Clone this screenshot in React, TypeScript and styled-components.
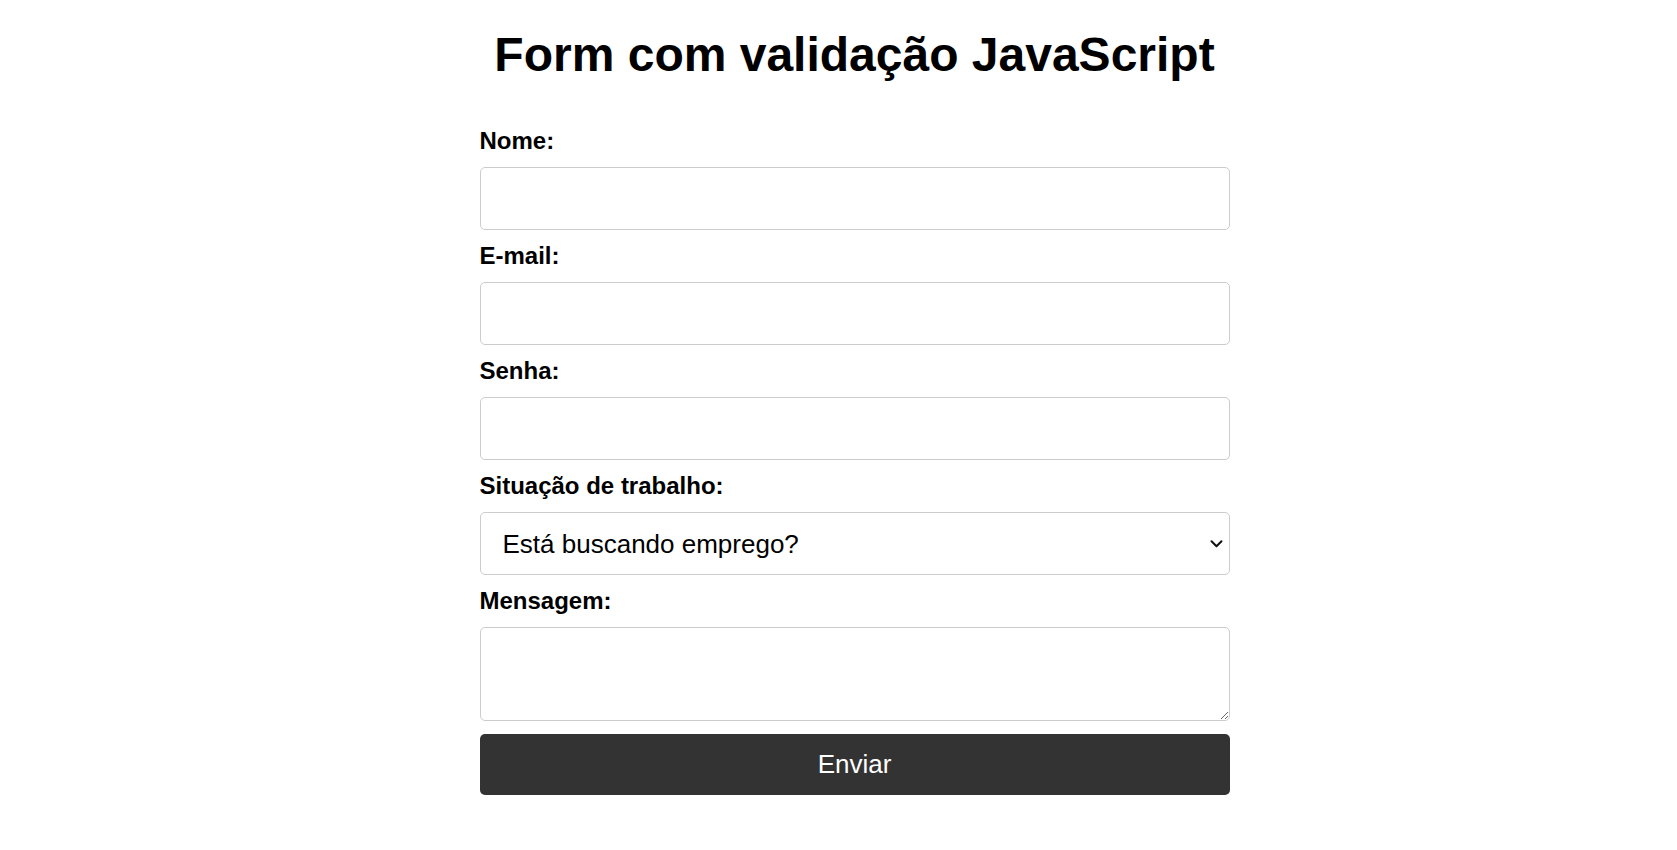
import React from "react";
import styled, { createGlobalStyle } from "styled-components";

const GlobalStyle = createGlobalStyle`
  html, body {
    margin: 0;
    padding: 0;
    background: #ffffff;
    color: #000000;
    font-family: "Liberation Sans", Arial, Helvetica, sans-serif;
  }
  * { box-sizing: border-box; }
`;

const Page = styled.div`
  display: flex;
  justify-content: center;
  padding: 28px 0 40px 32px;
`;

const Container = styled.div`
  width: 750px;
  display: flex;
  flex-direction: column;
`;

const Title = styled.h1`
  margin: 0 0 42px;
  font-size: 48px;
  line-height: 54px;
  font-weight: bold;
  text-align: center;
`;

const Form = styled.form`
  display: flex;
  flex-direction: column;
`;

const Label = styled.label`
  display: block;
  font-size: 24px;
  line-height: 28px;
  font-weight: bold;
  margin: 3px 0 12px;
`;

const fieldBase = `
  display: block;
  width: 100%;
  border: 1px solid #cccccc;
  border-radius: 5px;
  background: #ffffff;
  color: #000000;
  font-family: "Liberation Sans", Arial, Helvetica, sans-serif;
  font-size: 26px;
  padding: 0 22px;
  outline: none;
`;

const Input = styled.input`
  ${fieldBase}
  height: 63px;
  margin-bottom: 9px;
`;

const SelectWrap = styled.div`
  position: relative;
  margin-bottom: 9px;
`;

const Select = styled.select`
  ${fieldBase}
  height: 63px;
  appearance: none;
  -webkit-appearance: none;
  cursor: pointer;
`;

const Chevron = styled.svg`
  position: absolute;
  right: 7px;
  top: 50%;
  transform: translateY(-50%);
  pointer-events: none;
`;

const TextArea = styled.textarea`
  ${fieldBase}
  height: 94px;
  padding: 10px 22px;
  margin-bottom: 13px;
`;

const Button = styled.button`
  display: block;
  width: 100%;
  height: 61px;
  border: none;
  border-radius: 5px;
  background: #333333;
  color: #ffffff;
  font-family: "Liberation Sans", Arial, Helvetica, sans-serif;
  font-size: 26px;
  cursor: pointer;
`;

export default function App() {
  return (
    <>
      <GlobalStyle />
      <Page>
        <Container>
          <Title>Form com validação JavaScript</Title>
          <Form onSubmit={(e) => e.preventDefault()}>
            <Label htmlFor="nome">Nome:</Label>
            <Input id="nome" type="text" />
            <Label htmlFor="email">E-mail:</Label>
            <Input id="email" type="email" />
            <Label htmlFor="senha">Senha:</Label>
            <Input id="senha" type="password" />
            <Label htmlFor="situacao">Situação de trabalho:</Label>
            <SelectWrap>
              <Select id="situacao" defaultValue="">
                <option value="">Está buscando emprego?</option>
                <option value="sim">Sim</option>
                <option value="nao">Não</option>
              </Select>
              <Chevron width="13" height="9" viewBox="0 0 13 9" aria-hidden="true">
                <path d="M1.5 1.8 L6.5 6.8 L11.5 1.8" fill="none" stroke="#111" strokeWidth="2" strokeLinecap="round" strokeLinejoin="round" />
              </Chevron>
            </SelectWrap>
            <Label htmlFor="mensagem">Mensagem:</Label>
            <TextArea id="mensagem" />
            <Button type="submit">Enviar</Button>
          </Form>
        </Container>
      </Page>
    </>
  );
}
